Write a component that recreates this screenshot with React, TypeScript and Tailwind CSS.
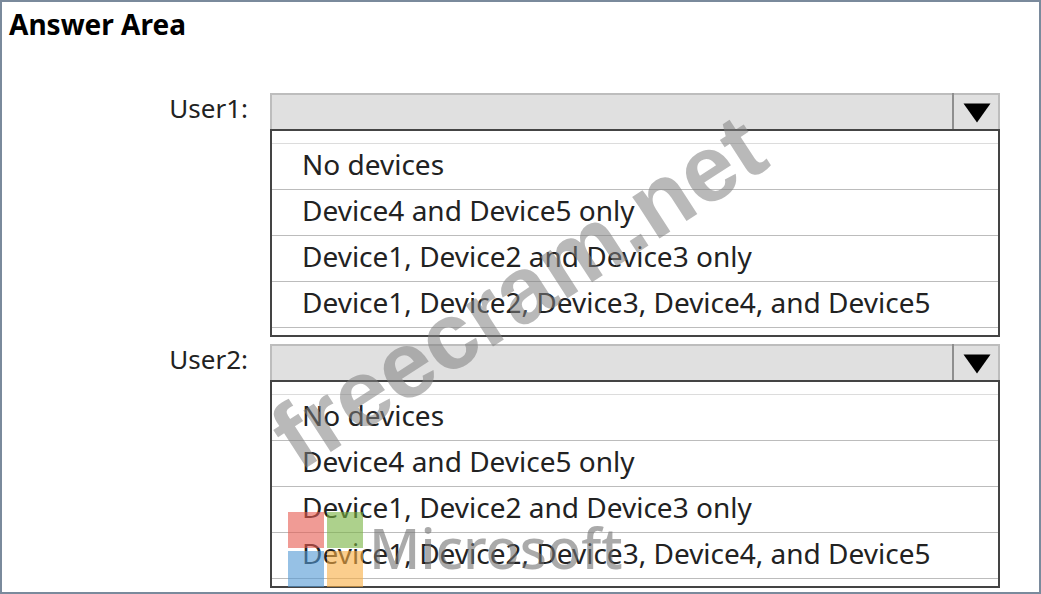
import { useState } from 'react';

const choices = [
  'No devices',
  'Device4 and Device5 only',
  'Device1, Device2 and Device3 only',
  'Device1, Device2, Device3, Device4, and Device5',
];

const users = [
  { id: 'user1', label: 'User1:' },
  { id: 'user2', label: 'User2:' },
];

function AnswerRow({ id, label }: { id: string; label: string }) {
  const [value, setValue] = useState('');

  return (
    <div className="flex items-start gap-[22px]">
      <label htmlFor={id} className="w-[246px] shrink-0 text-right text-[26px] leading-[30px]">
        {label}
      </label>
      <div className="min-w-0 flex-1">
        <div className="relative">
          <select
            id={id}
            value={value}
            onChange={(e) => setValue(e.target.value)}
            className="block h-9 w-full appearance-none border-2 border-b-0 border-[#bdbdbd] bg-[#e0e0e0] px-8 outline-none"
          >
            <option value=""></option>
            {choices.map((choice) => (
              <option key={choice} value={choice}>{choice}</option>
            ))}
          </select>
          <span className="pointer-events-none absolute inset-y-0 right-0 flex w-12 items-center justify-center border-l-2 border-[#8e8e8e]">
            <svg width="28" height="20" viewBox="0 0 28 20" className="mt-1">
              <path d="M0.5 0.5h27L14 19.5z" fill="#000" />
            </svg>
          </span>
        </div>
        <ul className="border-2 border-[#444] bg-white pb-[7px]">
          <li className="h-[13px] border-b border-[#dcdcdc]" aria-hidden="true" />
          {choices.map((choice) => (
            <li key={choice} className="h-[46px] border-b border-[#bcbcbc]">
              <button
                type="button"
                onClick={() => setValue(choice)}
                className="block w-full truncate pl-[30px] text-left leading-10"
              >
                {choice}
              </button>
            </li>
          ))}
        </ul>
      </div>
    </div>
  );
}

function MicrosoftMark() {
  return (
    <div className="pointer-events-none absolute bottom-[5px] left-[286px] flex items-start gap-1.5 opacity-60">
      <svg width="75" height="75" viewBox="0 0 75 75">
        <rect width="36" height="36" fill="#e75a50" />
        <rect x="39" width="36" height="36" fill="#78b341" />
        <rect y="39" width="36" height="36" fill="#5299d4" />
        <rect x="39" y="39" width="36" height="36" fill="#f9ae42" />
      </svg>
      <span className="text-[56px] font-medium leading-[70px] text-[#737373]">Microsoft</span>
    </div>
  );
}

export default function App() {
  return (
    <main className="relative overflow-hidden border-2 border-[#7a8a9c] bg-white pb-1 pr-[39px] font-['Noto_Sans',sans-serif] text-[28px] text-[#222]">
      <h1 className="mb-[51px] pl-[7px] pt-1 font-bold leading-9 text-black">Answer Area</h1>
      <div className="flex flex-col gap-[7px]">
        {users.map((user) => (
          <AnswerRow key={user.id} id={user.id} label={user.label} />
        ))}
      </div>
      <div className="pointer-events-none absolute left-[234px] top-[240px] -rotate-33 font-['Liberation_Sans',sans-serif] text-[94px] font-bold leading-[100px] text-[#808080]/55">
        freecram.net
      </div>
      <MicrosoftMark />
    </main>
  );
}
